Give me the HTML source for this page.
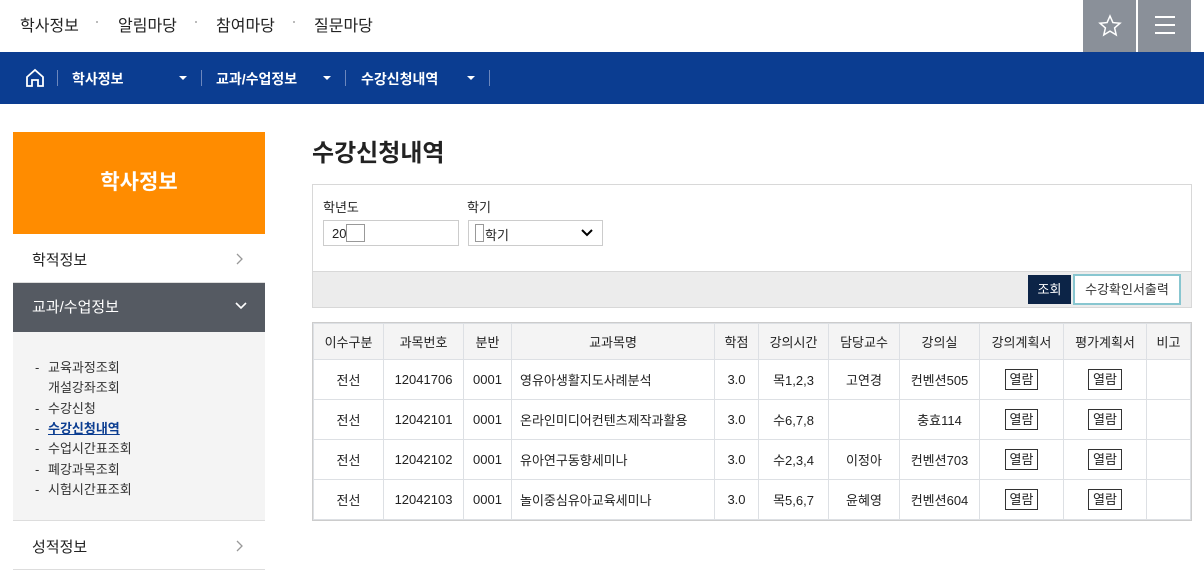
<!DOCTYPE html>
<html><head><meta charset="utf-8"><style>
*{margin:0;padding:0;box-sizing:border-box}
body{width:1204px;height:571px;overflow:hidden;background:#fff;font-family:"Liberation Sans","Noto Sans CJK KR",sans-serif;color:#222;position:relative}
.a{position:absolute}
.top{font-size:16px;color:#222;top:12px}
.dot{width:2px;height:2px;background:#bbb;top:21px}
.nav{top:52px;left:0;width:1204px;height:52px;background:#0b3d91}
.nav span{position:absolute;color:#fff;font-size:14px;font-weight:bold;top:17px}
.sep{position:absolute;top:18px;width:1px;height:16px;background:#6c87bd}
.tri{position:absolute;top:24px;width:0;height:0;border-left:4px solid transparent;border-right:4px solid transparent;border-top:4px solid #fff}
table{border-collapse:collapse;position:absolute;left:313px;top:323px;width:878px;font-size:13px}
td,th{border:1px solid #dde0e4;text-align:center;height:40px;font-weight:normal;color:#222}
th{background:#f4f4f4;height:36px}
.b{display:inline-block;border:1px solid #333;padding:0 4px;line-height:19px;font-size:13px}
.sub{font-size:13px;color:#333;left:35px}
.sub i{font-style:normal;display:inline-block;width:13px}
</style></head><body>
<div class="a top" style="left:20px">학사정보</div>
<div class="a dot" style="left:96px"></div>
<div class="a top" style="left:118px">알림마당</div>
<div class="a dot" style="left:195px"></div>
<div class="a top" style="left:216px">참여마당</div>
<div class="a dot" style="left:293px"></div>
<div class="a top" style="left:314px">질문마당</div>
<div class="a" style="left:1083px;top:0;width:53px;height:52px;background:#8a9099"></div>
<div class="a" style="left:1138px;top:0;width:53px;height:52px;background:#8a9099"></div>
<svg class="a" style="left:1098px;top:14px" width="24" height="24" viewBox="0 0 24 24"><path d="M12 2l2.9 6.6 7.1.6-5.4 4.7 1.6 7-6.2-3.8-6.2 3.8 1.6-7L2 9.2l7.1-.6z" fill="none" stroke="#fff" stroke-width="1.5"/></svg>
<div class="a" style="left:1155px;top:16px;width:20px;height:2px;background:#fff"></div>
<div class="a" style="left:1155px;top:24px;width:20px;height:2px;background:#fff"></div>
<div class="a" style="left:1155px;top:32px;width:20px;height:2px;background:#fff"></div>
<div class="a nav">
<svg style="position:absolute;left:25px;top:16px" width="20" height="20" viewBox="0 0 20 20"><path d="M2 9L10 2l8 7v9h-5v-6H7v6H2z" fill="none" stroke="#fff" stroke-width="1.8"/></svg>
<div class="sep" style="left:57px"></div>
<span style="left:72px">학사정보</span><div class="tri" style="left:179px"></div>
<div class="sep" style="left:201px"></div>
<span style="left:216px">교과/수업정보</span><div class="tri" style="left:323px"></div>
<div class="sep" style="left:345px"></div>
<span style="left:361px">수강신청내역</span><div class="tri" style="left:467px"></div>
<div class="sep" style="left:489px"></div>
</div>
<div class="a" style="left:13px;top:132px;width:252px;height:102px;background:#ff8c00;color:#fff;font-size:21px;font-weight:bold;text-align:center;line-height:102px">학사정보</div>
<div class="a" style="left:32px;top:249px;font-size:15px">학적정보</div>
<svg class="a" style="left:236px;top:253px" width="8" height="12"><path d="M1 1l5 5-5 5" fill="none" stroke="#999" stroke-width="1.3"/></svg>
<div class="a" style="left:13px;top:282px;width:252px;height:1px;background:#ddd"></div>
<div class="a" style="left:13px;top:283px;width:252px;height:49px;background:#555a62;color:#fff;font-size:15px;line-height:49px;padding-left:19px">교과/수업정보</div>
<svg class="a" style="left:235px;top:302px" width="12" height="8"><path d="M1 1l5 5 5-5" fill="none" stroke="#fff" stroke-width="1.6"/></svg>
<div class="a" style="left:13px;top:332px;width:252px;height:188px;background:#f4f4f4"></div>
<div class="a sub" style="top:357px"><i>-</i>교육과정조회</div>
<div class="a sub" style="top:377px"><i></i>개설강좌조회</div>
<div class="a sub" style="top:398px"><i>-</i>수강신청</div>
<div class="a sub" style="top:418px"><i>-</i><b style="color:#0b3d91;text-decoration:underline">수강신청내역</b></div>
<div class="a sub" style="top:438px"><i>-</i>수업시간표조회</div>
<div class="a sub" style="top:459px"><i>-</i>폐강과목조회</div>
<div class="a sub" style="top:479px"><i>-</i>시험시간표조회</div>
<div class="a" style="left:13px;top:520px;width:252px;height:1px;background:#ddd"></div>
<div class="a" style="left:32px;top:536px;font-size:15px">성적정보</div>
<svg class="a" style="left:236px;top:540px" width="8" height="12"><path d="M1 1l5 5-5 5" fill="none" stroke="#999" stroke-width="1.3"/></svg>
<div class="a" style="left:13px;top:569px;width:252px;height:1px;background:#ddd"></div>

<div class="a" style="left:312px;top:133px;font-size:24px;font-weight:bold;color:#222">수강신청내역</div>
<div class="a" style="left:312px;top:184px;width:880px;height:124px;border:1px solid #d8d8d8"></div>
<div class="a" style="left:313px;top:271px;width:878px;height:36px;background:#ececec;border-top:1px solid #d8d8d8"></div>
<div class="a" style="left:323px;top:197px;font-size:13px">학년도</div>
<div class="a" style="left:467px;top:197px;font-size:13px">학기</div>
<div class="a" style="left:323px;top:220px;width:136px;height:26px;border:1px solid #ccc;font-size:13px;padding:5px 8px">20</div>
<div class="a" style="left:346px;top:224px;width:19px;height:18px;border:1px solid #999"></div>
<div class="a" style="left:468px;top:220px;width:135px;height:26px;border:1px solid #ccc;font-size:13px;padding:4px 0 0 16px">학기</div>
<div class="a" style="left:475px;top:224px;width:9px;height:18px;border:1px solid #999"></div>
<svg class="a" style="left:581px;top:229px" width="12" height="8"><path d="M1 1l5 5 5-5" fill="none" stroke="#000" stroke-width="2"/></svg>
<div class="a" style="left:1028px;top:275px;width:43px;height:29px;background:#0c2447;color:#fff;font-size:13px;text-align:center;line-height:29px">조회</div>
<div class="a" style="left:1073px;top:274px;width:108px;height:31px;border:2px solid #88c6d0;background:#fff;font-size:13px;text-align:center;line-height:27px;color:#333">수강확인서출력</div>

<table style="outline:1px solid #ccc;outline-offset:0">
<tr><th style="width:70px">이수구분</th><th style="width:80px">과목번호</th><th style="width:48px">분반</th><th style="width:203px">교과목명</th><th style="width:44px">학점</th><th style="width:70px">강의시간</th><th style="width:71px">담당교수</th><th style="width:80px">강의실</th><th style="width:84px">강의계획서</th><th style="width:83px">평가계획서</th><th>비고</th></tr>
<tr><td>전선</td><td>12041706</td><td>0001</td><td style="text-align:left;padding-left:8px">영유아생활지도사례분석</td><td>3.0</td><td>목1,2,3</td><td>고연경</td><td>컨벤션505</td><td><span class="b">열람</span></td><td><span class="b">열람</span></td><td></td></tr>
<tr><td>전선</td><td>12042101</td><td>0001</td><td style="text-align:left;padding-left:8px">온라인미디어컨텐츠제작과활용</td><td>3.0</td><td>수6,7,8</td><td></td><td>충효114</td><td><span class="b">열람</span></td><td><span class="b">열람</span></td><td></td></tr>
<tr><td>전선</td><td>12042102</td><td>0001</td><td style="text-align:left;padding-left:8px">유아연구동향세미나</td><td>3.0</td><td>수2,3,4</td><td>이정아</td><td>컨벤션703</td><td><span class="b">열람</span></td><td><span class="b">열람</span></td><td></td></tr>
<tr><td>전선</td><td>12042103</td><td>0001</td><td style="text-align:left;padding-left:8px">놀이중심유아교육세미나</td><td>3.0</td><td>목5,6,7</td><td>윤혜영</td><td>컨벤션604</td><td><span class="b">열람</span></td><td><span class="b">열람</span></td><td></td></tr>
</table>
</body></html>
